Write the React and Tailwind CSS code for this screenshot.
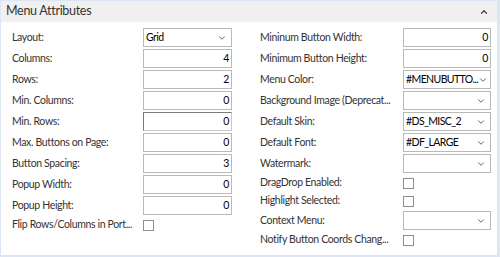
import { ChevronDown, ChevronUp } from 'lucide-react';

const leftRows = [
  { label: 'Layout:', type: 'select', value: 'Grid' },
  { label: 'Columns:', type: 'number', value: '4' },
  { label: 'Rows:', type: 'number', value: '2' },
  { label: 'Min. Columns:', type: 'number', value: '0' },
  { label: 'Min. Rows:', type: 'number', value: '0', focused: true },
  { label: 'Max. Buttons on Page:', type: 'number', value: '0' },
  { label: 'Button Spacing:', type: 'number', value: '3' },
  { label: 'Popup Width:', type: 'number', value: '0' },
  { label: 'Popup Height:', type: 'number', value: '0' },
  { label: 'Flip Rows/Columns in Port...', type: 'check' },
];

const rightRows = [
  { label: 'Mininum Button Width:', type: 'number', value: '0' },
  { label: 'Minimum Button Height:', type: 'number', value: '0' },
  { label: 'Menu Color:', type: 'select', value: '#MENUBUTTO...' },
  { label: 'Background Image (Deprecat...', type: 'select', value: '' },
  { label: 'Default Skin:', type: 'select', value: '#DS_MISC_2' },
  { label: 'Default Font:', type: 'select', value: '#DF_LARGE' },
  { label: 'Watermark:', type: 'select', value: '' },
  { label: 'DragDrop Enabled:', type: 'check' },
  { label: 'Highlight Selected:', type: 'check' },
  { label: 'Context Menu:', type: 'select', value: '' },
  { label: 'Notify Button Coords Chang...', type: 'check' },
];

const Field = ({ row }) => {
  if (row.type === 'check') {
    return <div className="w-[11px] h-[11px] border border-[#8f8f8f] bg-white" />;
  }
  const border = row.focused ? 'border-[#7a7a7a] border-r-[#c8c8c8] border-b-[#c8c8c8]' : 'border-[#b9b9b9]';
  if (row.type === 'select') {
    return (
      <div className={`h-[19px] w-full border ${border} bg-white flex items-center pl-[2px] pr-[4px]`}>
        <span className="flex-1 text-black whitespace-nowrap tracking-[-0.6px]">{row.value}</span>
        <ChevronDown size={10} strokeWidth={2.2} className="text-[#555] flex-none" />
      </div>
    );
  }
  return (
    <div className={`h-[19px] w-full border ${border} bg-white flex items-center justify-end pr-[2px]`}>
      <span className="text-black">{row.value}</span>
    </div>
  );
};

const Column = ({ rows, labelW, inputW }) => (
  <div className="flex flex-col">
    {rows.map((row) => (
      <div key={row.label} className={`flex items-center ${row.type === 'check' ? 'h-[18px]' : 'h-[21px]'}`}>
        <div className="flex-none text-[#333] whitespace-nowrap overflow-hidden" style={{ width: labelW }}>
          {row.label}
        </div>
        <div className="flex-none" style={{ width: inputW }}>
          <Field row={row} />
        </div>
      </div>
    ))}
  </div>
);

export default function App() {
  return (
    <div
      className="w-[500px] h-[257px] bg-[#dce6f2] pl-px pt-px pr-[3px] pb-[2px]"
      style={{ fontFamily: 'Lato, "Open Sans", sans-serif' }}
    >
      <div className="h-full bg-white flex flex-col text-[10.5px] tracking-[-0.35px]">
        {/* Header */}
        <div className="h-[21px] bg-[#f0f0f0] flex items-center justify-between pl-[5px] pr-[8px]">
          <span className="text-[12.5px] tracking-[-0.3px] text-[#333]">Menu Attributes</span>
          <ChevronUp size={10} strokeWidth={3} className="text-[#444]" />
        </div>

        {/* Body */}
        <div className="flex pt-[5px] pl-[11px]">
          <Column rows={leftRows} labelW={131} inputW={89} />
          <div className="w-[28px] flex-none" />
          <Column rows={rightRows} labelW={143} inputW={88} />
        </div>
      </div>
    </div>
  );
}
